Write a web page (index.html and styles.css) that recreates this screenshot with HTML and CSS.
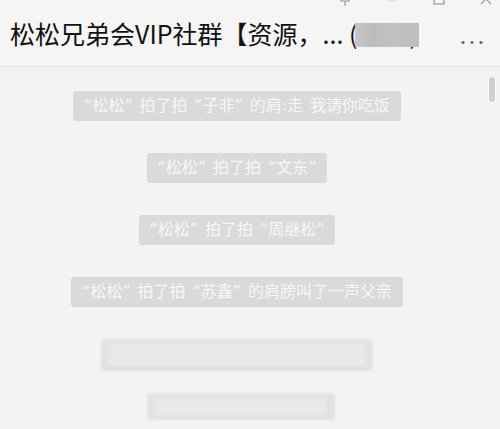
FILE: index.html
```html
<!DOCTYPE html>
<html lang="zh-CN">
<head>
<meta charset="utf-8">
<link rel="stylesheet" href="styles.css">
</head>
<body>
<div class="window">
  <header class="titlebar">
    <div class="controls">
      <svg class="ctl pin" width="12" height="14" viewBox="0 0 12 14"><path d="M3 1h6M4 1v5l-2 3h8l-2-3V1M6 9v5" fill="none" stroke="#9a9a9a" stroke-width="1.2"/></svg>
      <svg class="ctl min" width="12" height="14" viewBox="0 0 12 14"><path d="M1 8h10" fill="none" stroke="#d6d6d6" stroke-width="1.2"/></svg>
      <svg class="ctl max" width="12" height="14" viewBox="0 0 12 14"><rect x="1" y="2" width="10" height="10" fill="none" stroke="#9a9a9a" stroke-width="1.2"/></svg>
      <svg class="ctl close" width="12" height="14" viewBox="0 0 12 14"><path d="M1 2l10 10M11 2L1 12" fill="none" stroke="#9a9a9a" stroke-width="1.2"/></svg>
    </div>
    <div class="titlerow">
      <h1 class="title">松松兄弟会VIP社群【资源，... (<span class="mask"></span>)</h1>
      <svg class="more" width="22" height="5" viewBox="0 0 22 5"><circle cx="2" cy="2.5" r="1.6" fill="#6a6a6a"/><circle cx="11" cy="2.5" r="1.6" fill="#6a6a6a"/><circle cx="20" cy="2.5" r="1.6" fill="#6a6a6a"/></svg>
    </div>
  </header>
  <main class="chat">
    <div class="sys">“松松” 拍了拍 “子非” 的肩:走 我请你吃饭</div>
    <div class="sys">“松松” 拍了拍 “文东”</div>
    <div class="sys">“松松” 拍了拍 “周继松”</div>
    <div class="sys">“松松” 拍了拍 “苏鑫” 的肩膀叫了一声父亲</div>
    <div class="sys blur wide"><span class="blk"></span></div>
    <div class="sys blur short"><span class="blk"></span></div>
  </main>
  <div class="scrollbar"></div>
</div>
</body>
</html>
```
FILE: styles.css
```css
html, body {
  margin: 0;
  padding: 0;
}
body {
  width: 500px;
  height: 429px;
  overflow: hidden;
  background: #f3f3f3;
  font-family: "Microsoft YaHei", "Noto Sans CJK SC", sans-serif;
}
.window {
  position: relative;
  width: 500px;
  height: 429px;
}
.titlebar {
  height: 66px;
  background: #f5f5f5;
  border-bottom: 1px solid #e6e6e6;
  box-sizing: content-box;
}
.controls {
  height: 6px;
  overflow: hidden;
  display: flex;
  justify-content: flex-end;
  gap: 35px;
  padding-right: 8px;
}
.ctl {
  margin-top: -8px;
  flex: none;
}
.titlerow {
  display: flex;
  align-items: center;
  justify-content: space-between;
  height: 54px;
  padding: 0 17px 0 10px;
}
.title {
  margin: 0;
  font-size: 25px;
  font-weight: normal;
  line-height: 30px;
  color: #111;
  white-space: nowrap;
}
.mask {
  display: inline-block;
  width: 64px;
  height: 24px;
  margin: 0 -10px 0 -2px;
  vertical-align: -3px;
  position: relative;
  z-index: 1;
  background: linear-gradient(90deg, #c6c6c6 0%, #bcbcbc 30%, #c2c2c2 60%, #bdbdbd 100%);
}
.more {
  margin-top: 18px;
}
.chat {
  display: flex;
  flex-direction: column;
  align-items: center;
  gap: 32px;
  padding: 24px 26px 0 0;
}
.sys {
  background: #dadada;
  color: #f6f6f6;
  font-family: "DejaVu Sans", "Noto Sans CJK SC", sans-serif;
  font-size: 16px;
  line-height: 18px;
  word-spacing: 1.8px;
  padding: 6px 11px;
  border-radius: 3px;
  white-space: nowrap;
}
.blur {
  background: #e2e2e2;
  filter: blur(1px);
  padding: 5px 8px;
}
.wide {
  width: 256px;
  height: 22px;
}
.short {
  width: 172px;
  height: 17px;
  margin-top: -10px;
  margin-left: 8px;
}
.blk {
  display: block;
  height: 100%;
  background: #e9e9e9;
}
.scrollbar {
  position: absolute;
  left: 489px;
  top: 77px;
  width: 6px;
  height: 25px;
  border-radius: 3px;
  background: #cfcfcf;
  box-shadow: 0 0 0 1px #fbfbfb;
}
```
